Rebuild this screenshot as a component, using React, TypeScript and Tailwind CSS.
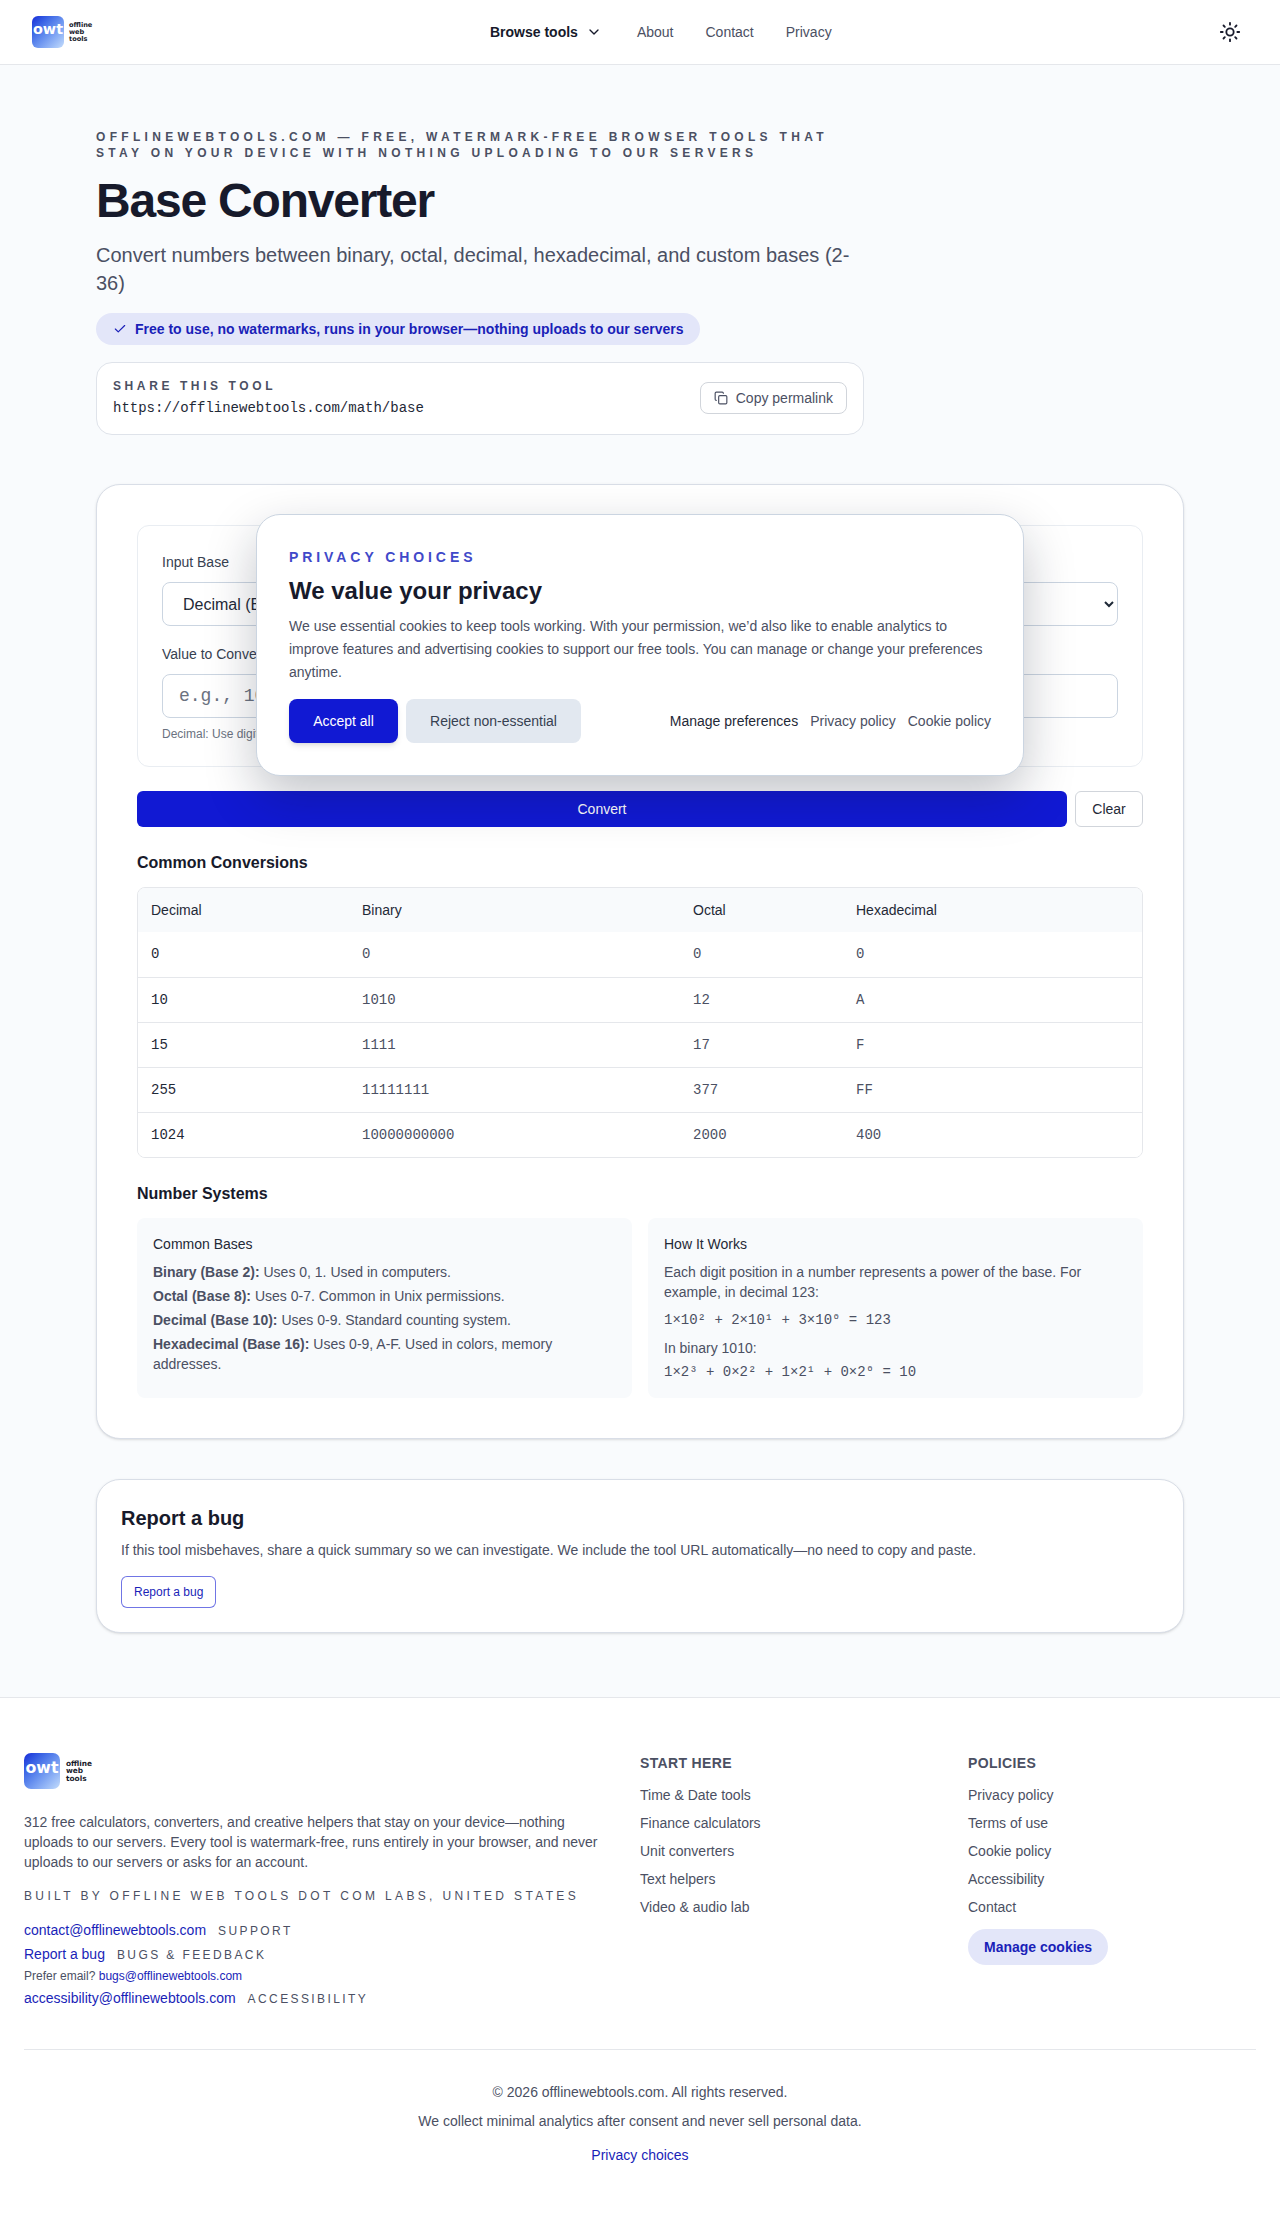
import { Check, ChevronDown, Copy, Sun } from "lucide-react";

const sans = "font-['Liberation_Sans',Arial,sans-serif]";
const mono = "font-['Liberation_Mono','Courier_New',monospace]";

function Logo({ size }: { size: "sm" | "lg" }) {
  const lg = size === "lg";
  return (
    <div className="flex items-center">
      <div
        className={
          lg
            ? "flex h-9 w-9 items-center justify-center overflow-hidden rounded-[7px] bg-gradient-to-br from-[#1c25d8] to-[#c4dcfb]"
            : "flex h-8 w-8 items-center justify-center overflow-hidden rounded-[6px] bg-gradient-to-br from-[#1c25d8] to-[#c4dcfb]"
        }
      >
        <span
          className={
            lg
              ? "mt-[-6px] font-['DejaVu_Sans',sans-serif] text-[15.8px] leading-none font-bold whitespace-nowrap text-white"
              : "mt-[-5px] font-['DejaVu_Sans',sans-serif] text-[14.4px] leading-none font-bold whitespace-nowrap text-white"
          }
        >
          owt
        </span>
      </div>
      <div
        className={
          lg
            ? "ml-[6px] font-['DejaVu_Sans',sans-serif] text-[7.4px] leading-[7.5px] font-bold text-[#171a2b]"
            : "ml-[5px] font-['DejaVu_Sans',sans-serif] text-[6.6px] leading-[7px] font-bold text-[#171a2b]"
        }
      >
        <div>offline</div>
        <div>web</div>
        <div>tools</div>
      </div>
    </div>
  );
}

function Header() {
  return (
    <header className="relative flex h-[65px] items-center border-b border-[#e5e7eb] bg-white pr-[39px] pl-[32px]">
      <Logo size="sm" />
      <nav className="absolute top-0 left-[490px] flex h-[64px] items-center text-sm text-[#4b5063]">
        <span className="flex items-center font-semibold text-[#171a2b]">
          Browse tools
          <ChevronDown className="ml-[8px] h-4 w-4" strokeWidth={2} />
        </span>
        <span className="ml-[35px]">About</span>
        <span className="ml-[32px]">Contact</span>
        <span className="ml-[32px]">Privacy</span>
      </nav>
      <Sun className="ml-auto h-[22px] w-[22px] text-[#171a2b]" strokeWidth={2} />
    </header>
  );
}

function Hero() {
  return (
    <section className="w-[768px]">
      <p className="text-xs leading-4 font-semibold tracking-[0.36em] text-[#4b5063] uppercase">
        offlinewebtools.com — free, watermark-free browser tools that stay on your device with nothing uploading to our servers
      </p>
      <h1 className="mt-[16px] text-5xl leading-[48px] font-bold tracking-[-0.025em] text-[#171a2b]">Base Converter</h1>
      <p className="mt-[16px] text-xl leading-7 text-[#4b5063]">
        Convert numbers between binary, octal, decimal, hexadecimal, and custom bases (2-36)
      </p>
      <div className="mt-[16px] inline-flex h-[32px] items-center rounded-full bg-[#e3e6f9] px-[17px] text-sm font-semibold text-[#1a1fb8]">
        <Check className="mr-[8px] h-[14px] w-[14px]" strokeWidth={2} />
        Free to use, no watermarks, runs in your browser—nothing uploads to our servers
      </div>
      <div className="mt-[17px] flex h-[73px] items-center justify-between rounded-2xl border border-[#dfe3ea] bg-white pr-[16px] pb-[2px] pl-[16px]">
        <div>
          <div className="text-xs leading-4 font-semibold tracking-[0.3em] text-[#4b5063] uppercase">Share this tool</div>
          <div className={`${mono} mt-[4px] text-sm leading-5 text-[#1f2937]`}>https://offlinewebtools.com/math/base</div>
        </div>
        <button className="flex h-[32px] items-center rounded-lg border border-[#d1d5db] bg-white px-[13px] text-sm text-[#4b5063]">
          <Copy className="mr-[8px] h-[14px] w-[14px]" strokeWidth={2} />
          Copy permalink
        </button>
      </div>
    </section>
  );
}

function Form() {
  const selectCls =
    "h-[44px] w-full rounded-lg border border-[#cbd5e1] bg-white px-[16px] text-base text-[#1f2937]";
  const inputCls = `${mono} h-[44px] w-full rounded-lg border border-[#cbd5e1] bg-white px-[16px] text-lg text-[#1f2937] placeholder:text-[#6b7280]`;
  const labelCls = "block text-sm leading-6 font-medium text-[#374151]";
  return (
    <div className="rounded-xl border border-[#e9edf2] bg-white p-[24px]">
      <div className="grid grid-cols-2 gap-x-[24px] gap-y-[16px]">
        <div>
          <label className={labelCls}>Input Base</label>
          <select className={`${selectCls} mt-[8px]`} defaultValue="10">
            <option value="10">Decimal (Base 10)</option>
          </select>
        </div>
        <div>
          <label className={labelCls}>Output Base</label>
          <select className={`${selectCls} mt-[8px]`} defaultValue="2">
            <option value="2">Binary (Base 2)</option>
          </select>
        </div>
        <div>
          <label className={labelCls}>Value to Convert</label>
          <input className={`${inputCls} mt-[8px]`} placeholder="e.g., 1010" />
          <p className="mt-[8px] text-xs leading-4 text-[#6b7280]">Decimal: Use digits 0-9</p>
        </div>
        <div>
          <label className={labelCls}>Result</label>
          <input className={`${inputCls} mt-[8px]`} />
        </div>
      </div>
    </div>
  );
}

const rows = [
  ["0", "0", "0", "0"],
  ["10", "1010", "12", "A"],
  ["15", "1111", "17", "F"],
  ["255", "11111111", "377", "FF"],
  ["1024", "10000000000", "2000", "400"],
];

function ConversionTable() {
  return (
    <div className="mt-[12px] overflow-hidden rounded-lg border border-[#e5e7eb]">
      <table className="w-full table-fixed border-collapse text-sm">
        <thead>
          <tr className="h-[44px] bg-[#f8fafc] text-left text-[#1f2937]">
            <th className="w-[211px] pl-[13px] font-medium">Decimal</th>
            <th className="w-[331px] pl-[13px] font-medium">Binary</th>
            <th className="w-[163px] pl-[13px] font-medium">Octal</th>
            <th className="pl-[13px] font-medium">Hexadecimal</th>
          </tr>
        </thead>
        <tbody className={mono}>
          {rows.map((r, i) => (
            <tr key={r[0]} className={i === 0 ? "h-[45px] bg-white" : "h-[45px] border-t border-[#e5e7eb] bg-white"}>
              <td className="pl-[13px] text-[#1f2937]">{r[0]}</td>
              <td className="pl-[13px] text-[#4b5063]">{r[1]}</td>
              <td className="pl-[13px] text-[#4b5063]">{r[2]}</td>
              <td className="pl-[13px] text-[#4b5063]">{r[3]}</td>
            </tr>
          ))}
        </tbody>
      </table>
    </div>
  );
}

function NumberSystems() {
  return (
    <div className="mt-[12px] grid grid-cols-2 gap-[16px] text-sm leading-5 text-[#4b5063]">
      <div className="rounded-lg bg-[#f8fafc] p-[16px]">
        <h3 className="font-medium text-[#1f2937]">Common Bases</h3>
        <div className="mt-[8px] space-y-[4px]">
          <p><strong className="font-semibold">Binary (Base 2):</strong> Uses 0, 1. Used in computers.</p>
          <p><strong className="font-semibold">Octal (Base 8):</strong> Uses 0-7. Common in Unix permissions.</p>
          <p><strong className="font-semibold">Decimal (Base 10):</strong> Uses 0-9. Standard counting system.</p>
          <p><strong className="font-semibold">Hexadecimal (Base 16):</strong> Uses 0-9, A-F. Used in colors, memory addresses.</p>
        </div>
      </div>
      <div className="rounded-lg bg-[#f8fafc] p-[16px]">
        <h3 className="font-medium text-[#1f2937]">How It Works</h3>
        <p className="mt-[8px]">Each digit position in a number represents a power of the base. For example, in decimal 123:</p>
        <p className={`${mono} mt-[8px]`}>1×10² + 2×10¹ + 3×10⁰ = 123</p>
        <p className="mt-[8px]">In binary 1010:</p>
        <p className={`${mono} mt-[4px]`}>1×2³ + 0×2² + 1×2¹ + 0×2⁰ = 10</p>
      </div>
    </div>
  );
}

function Tool() {
  return (
    <section className="mt-[49px] rounded-3xl border border-[#d9dee7] bg-white p-[40px] shadow-sm">
      <Form />
      <div className="mt-[24px] flex gap-[8px]">
        <button className="h-[36px] flex-1 rounded-md bg-[#1119d3] text-sm text-white">Convert</button>
        <button className="h-[36px] w-[68px] rounded-md border border-[#d1d5db] bg-white text-sm text-[#1f2937]">Clear</button>
      </div>
      <h2 className="mt-[24px] text-base leading-6 font-semibold text-[#171a2b]">Common Conversions</h2>
      <ConversionTable />
      <h2 className="mt-[24px] text-base leading-6 font-semibold text-[#171a2b]">Number Systems</h2>
      <NumberSystems />
    </section>
  );
}

function Report() {
  return (
    <section className="mt-[40px] rounded-3xl border border-[#d9dee7] bg-white px-[24px] py-[24px] shadow-sm">
      <h2 className="text-xl leading-7 font-semibold text-[#171a2b]">Report a bug</h2>
      <p className="mt-[8px] text-sm leading-5 text-[#4b5063]">
        If this tool misbehaves, share a quick summary so we can investigate. We include the tool URL automatically—no need to copy and paste.
      </p>
      <button className="mt-[16px] h-[32px] rounded-md border border-[#1119d3]/60 bg-white px-[12px] text-xs text-[#1a1fb8]">
        Report a bug
      </button>
    </section>
  );
}

function Footer() {
  const start = ["Time & Date tools", "Finance calculators", "Unit converters", "Text helpers", "Video & audio lab"];
  const policies = ["Privacy policy", "Terms of use", "Cookie policy", "Accessibility", "Contact"];
  const tag = "ml-[12px] text-xs tracking-[0.2em] text-[#4b5063] uppercase";
  const link = "text-[#1a1fb8]";
  return (
    <footer className="mt-[64px] flex-1 border-t border-[#e5e7eb] bg-white px-[24px] pt-[55px] pb-[24px]">
      <div className="flex h-[297px] border-b border-[#e5e7eb]">
        <div className="w-[616px]">
          <Logo size="lg" />
          <p className="mt-[23px] w-[590px] text-sm leading-5 text-[#4b5063]">
            312 free calculators, converters, and creative helpers that stay on your device—nothing uploads to our servers. Every tool is watermark-free, runs entirely in your browser, and never uploads to our servers or asks for an account.
          </p>
          <p className="mt-[16px] text-xs leading-4 tracking-[0.28em] text-[#4b5063] uppercase">Built by Offline Web Tools Dot Com Labs, United States</p>
          <div className="mt-[16px] text-sm leading-5">
            <div><span className={link}>contact@offlinewebtools.com</span><span className={tag}>Support</span></div>
            <div className="mt-[4px]"><span className={link}>Report a bug</span><span className={tag}>Bugs &amp; feedback</span></div>
            <div className="mt-[4px] text-xs leading-4 text-[#4b5063]">Prefer email? <span className={link}>bugs@offlinewebtools.com</span></div>
            <div className="mt-[4px]"><span className={link}>accessibility@offlinewebtools.com</span><span className={tag}>Accessibility</span></div>
          </div>
        </div>
        <div className="w-[328px]">
          <h3 className="text-sm leading-5 font-semibold tracking-[0.025em] text-[#4b5063] uppercase">Start here</h3>
          <ul className="mt-[12px] space-y-[8px] text-sm leading-5 text-[#4b5063]">
            {start.map((s) => <li key={s}>{s}</li>)}
          </ul>
        </div>
        <div>
          <h3 className="text-sm leading-5 font-semibold tracking-[0.025em] text-[#4b5063] uppercase">Policies</h3>
          <ul className="mt-[12px] space-y-[8px] text-sm leading-5 text-[#4b5063]">
            {policies.map((s) => <li key={s}>{s}</li>)}
          </ul>
          <button className="mt-[12px] h-[36px] rounded-full bg-[#e3e6f9] px-[16px] text-sm font-semibold text-[#1a1fb8]">Manage cookies</button>
        </div>
      </div>
      <div className="pt-[32px] text-center text-sm leading-5 text-[#4b5063]">
        <p>© 2026 offlinewebtools.com. All rights reserved.</p>
        <p className="mt-[9px]">We collect minimal analytics after consent and never sell personal data.</p>
        <p className="mt-[14px] text-[#1a1fb8]">Privacy choices</p>
      </div>
    </footer>
  );
}

function CookieModal() {
  return (
    <div className="absolute top-[514px] left-[256px] w-[768px] rounded-3xl border border-[#cbd5e1] bg-white p-[32px] shadow-[0_20px_50px_rgba(15,23,42,0.25)]">
      <p className="text-sm leading-5 font-semibold tracking-[0.28em] text-[#3f49c9] uppercase">Privacy choices</p>
      <h2 className="mt-[8px] text-2xl leading-8 font-bold text-[#171a2b]">We value your privacy</h2>
      <p className="mt-[8px] text-sm leading-[22.75px] text-[#4b5063]">
        We use essential cookies to keep tools working. With your permission, we’d also like to enable analytics to improve features and advertising cookies to support our free tools. You can manage or change your preferences anytime.
      </p>
      <div className="mt-[16px] flex items-center text-sm">
        <button className="h-[44px] w-[109px] rounded-lg bg-[#1119d3] text-white shadow-md">Accept all</button>
        <button className="ml-[8px] h-[44px] w-[175px] rounded-lg bg-[#e2e8f0] text-[#374151]">Reject non-essential</button>
        <span className="ml-auto text-[#1f2937]">Manage preferences</span>
        <span className="ml-[12px] text-[#4b5063]">Privacy policy</span>
        <span className="ml-[12px] text-[#4b5063]">Cookie policy</span>
      </div>
    </div>
  );
}

export default function App() {
  return (
    <div className={`${sans} relative flex min-h-[2220px] flex-col bg-[#f9fbfd]`}>
      <Header />
      <main className="mx-auto w-[1088px] pt-[64px]">
        <Hero />
        <Tool />
        <Report />
      </main>
      <Footer />
      <CookieModal />
    </div>
  );
}
